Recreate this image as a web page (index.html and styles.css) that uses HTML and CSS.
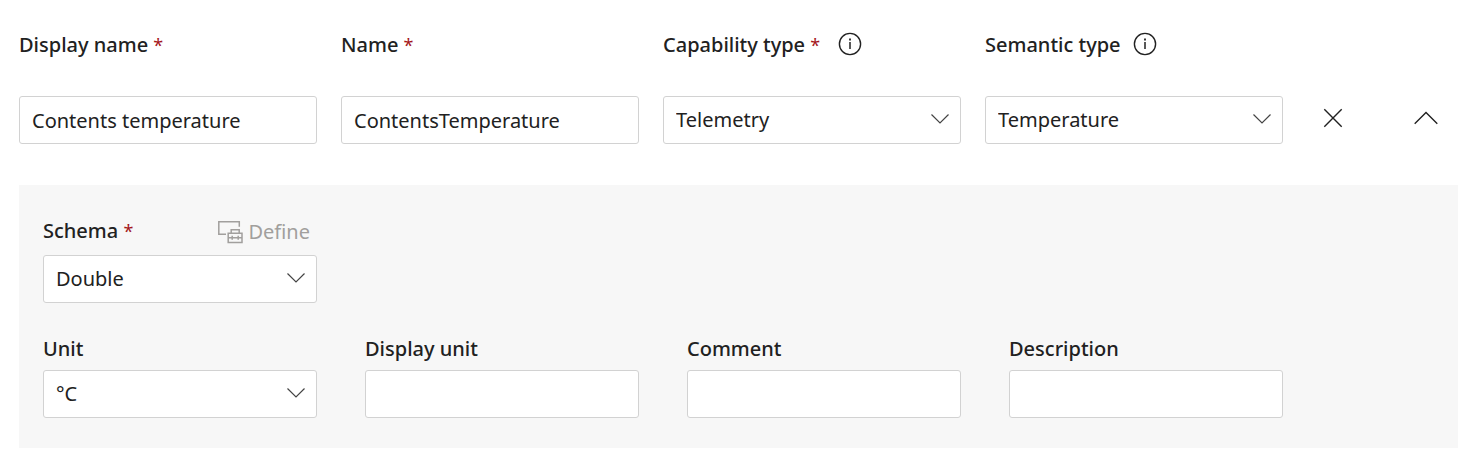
FILE: index.html
```html
<!DOCTYPE html>
<html lang="en">
<head>
<meta charset="utf-8">
<meta name="viewport" content="width=device-width, initial-scale=1">
<title>Capability</title>
<link rel="stylesheet" href="styles.css">
</head>
<body>
<form class="capability">
  <div class="summary">
    <div class="field field-top">
      <div class="field-head"><label class="label" for="display-name">Display name <span class="required">*</span></label></div>
      <input class="control" id="display-name" type="text" value="Contents temperature">
    </div>
    <div class="field field-top">
      <div class="field-head"><label class="label" for="name">Name <span class="required">*</span></label></div>
      <input class="control" id="name" type="text" value="ContentsTemperature">
    </div>
    <div class="field field-top">
      <div class="field-head">
        <label class="label" for="capability-type">Capability type <span class="required">*</span></label>
        <button class="info info-wide" type="button" aria-label="About capability type">
          <svg width="24" height="24" viewBox="0 0 24 24" fill="none" stroke="currentColor"><circle cx="12" cy="12" r="10.6" stroke-width="1.4"/><path d="M12 10v7" stroke-width="1.5"/><path d="M12 6.6v1.8" stroke-width="1.8"/></svg>
        </button>
      </div>
      <div class="dropdown">
        <select class="control" id="capability-type"><option>Telemetry</option></select>
        <svg class="chevron" width="20" height="12" viewBox="0 0 20 12"><path d="M1.5 1.5L10 10l8.500-8.500"/></svg>
      </div>
    </div>
    <div class="field field-top">
      <div class="field-head">
        <label class="label" for="semantic-type">Semantic type</label>
        <button class="info" type="button" aria-label="About semantic type">
          <svg width="24" height="24" viewBox="0 0 24 24" fill="none" stroke="currentColor"><circle cx="12" cy="12" r="10.6" stroke-width="1.4"/><path d="M12 10v7" stroke-width="1.5"/><path d="M12 6.6v1.8" stroke-width="1.8"/></svg>
        </button>
      </div>
      <div class="dropdown">
        <select class="control" id="semantic-type"><option>Temperature</option></select>
        <svg class="chevron" width="20" height="12" viewBox="0 0 20 12"><path d="M1.5 1.5L10 10l8.500-8.500"/></svg>
      </div>
    </div>
    <div class="actions">
      <button class="action action-remove" type="button" aria-label="Remove">
        <svg width="20" height="20" viewBox="0 0 20 20" fill="none" stroke="currentColor" stroke-width="1.4"><path d="M1.300 1.300l17.400 17.400M18.700 1.300L1.300 18.700"/></svg>
      </button>
      <button class="action action-collapse" type="button" aria-label="Collapse">
        <svg width="24" height="14" viewBox="0 0 24 14" fill="none" stroke="currentColor" stroke-width="1.4"><path d="M0.700 12.700L12 1.400l11.300 11.300"/></svg>
      </button>
    </div>
  </div>

  <div class="details">
    <div class="field field-schema">
      <div class="field-head">
        <label class="label" for="schema">Schema <span class="required">*</span></label>
        <button class="define" type="button" disabled>
          <svg width="26" height="24" viewBox="0 0 26 24" fill="none" stroke="currentColor" stroke-width="1.500"><path d="M8 14.200H0.800V1.800h20.500v5"/><path d="M10.200 13.200h13.800v9.200H10.200zM13.200 13v-3.200h8V13M10.200 17.800h3.300M14.800 17.800h4.800M20.800 17.800h3.200M14.200 15.800v4M20.200 15.800v4"/></svg>
          <span>Define</span>
        </button>
      </div>
      <div class="dropdown">
        <select class="control" id="schema"><option>Double</option></select>
        <svg class="chevron" width="20" height="12" viewBox="0 0 20 12"><path d="M1.5 1.5L10 10l8.500-8.500"/></svg>
      </div>
    </div>
    <div class="field field-first">
      <div class="field-head"><label class="label" for="unit">Unit</label></div>
      <div class="dropdown">
        <select class="control" id="unit"><option>°C</option></select>
        <svg class="chevron" width="20" height="12" viewBox="0 0 20 12"><path d="M1.5 1.5L10 10l8.500-8.500"/></svg>
      </div>
    </div>
    <div class="field">
      <div class="field-head"><label class="label" for="display-unit">Display unit</label></div>
      <input class="control" id="display-unit" type="text">
    </div>
    <div class="field">
      <div class="field-head"><label class="label" for="comment">Comment</label></div>
      <input class="control" id="comment" type="text">
    </div>
    <div class="field">
      <div class="field-head"><label class="label" for="description">Description</label></div>
      <input class="control" id="description" type="text">
    </div>
  </div>
</form>
</body>
</html>
```
FILE: styles.css
```css
* {
  box-sizing: border-box;
}

body {
  margin: 0;
  background: #fff;
  color: #212121;
  font: 400 20px/28px "Segoe UI", "Noto Sans", "Open Sans", sans-serif;
}

button {
  margin: 0;
  padding: 0;
  border: 0;
  background: none;
  color: inherit;
  font: inherit;
}

svg {
  display: block;
}

.capability {
  padding: 31px 8px 10px 19px;
}

.summary {
  display: grid;
  grid-template-columns: repeat(4, minmax(0, 1fr)) 151px;
  column-gap: 24px;
  align-items: end;
}

.field {
  display: flex;
  flex-direction: column;
  gap: 7px;
}

.field-top {
  gap: 37px;
}

.field-schema {
  gap: 10px;
}

.field-head {
  display: flex;
  align-items: center;
  height: 28px;
}

.label {
  font-weight: 500;
  white-space: nowrap;
}

.required {
  color: #a4161c;
  font-size: 18px;
  font-weight: 400;
}

.info {
  margin: 0 0 2px 12px;
}

.info-wide {
  margin-left: 18px;
}

.control {
  display: block;
  width: 100%;
  height: 48px;
  margin: 0;
  padding: 1px 12px;
  border: 1px solid #d2d2d2;
  border-radius: 3px;
  background: #fff;
  color: inherit;
  font: inherit;
  appearance: none;
}

.dropdown {
  position: relative;
}

.chevron {
  position: absolute;
  top: 17px;
  right: 11px;
  fill: none;
  stroke: #444;
  stroke-width: 1.2;
  pointer-events: none;
}

.actions {
  display: flex;
  justify-content: space-between;
  height: 48px;
}

.action {
  display: flex;
  align-items: center;
  justify-content: center;
  height: 44px;
}

.action-remove {
  width: 52px;
}

.action-collapse {
  width: 64px;
}

.details {
  display: grid;
  grid-template-columns: repeat(4, minmax(0, 1fr));
  gap: 32px 48px;
  margin-top: 41px;
  padding: 32px 175px 30px 24px;
  background: #f7f7f7;
}

.field-first {
  grid-column: 1;
}

.define {
  display: flex;
  align-items: center;
  gap: 4px;
  margin: 2px 7px 0 auto;
  color: #a19f9d;
}
```
